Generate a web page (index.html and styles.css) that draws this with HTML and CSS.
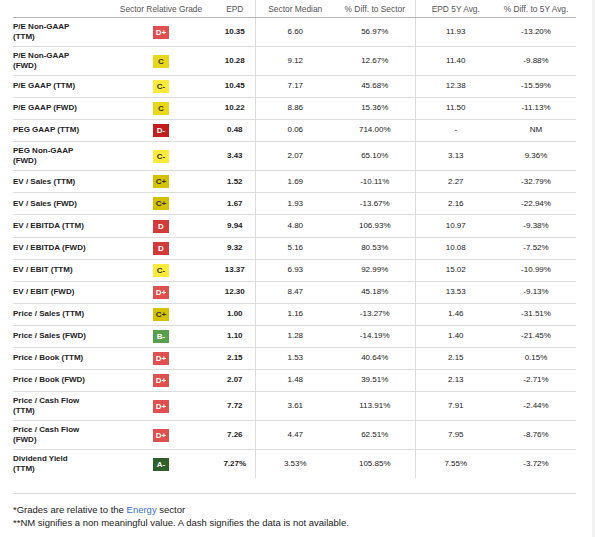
FILE: index.html
```html
<!DOCTYPE html>
<html lang="en">
<head>
    <meta charset="UTF-8">
    <meta name="viewport" content="width=device-width, initial-scale=1.0">
    <title>EPD Valuation Grades</title>
    <link rel="stylesheet" href="styles.css">
</head>
<body>
    <div class="page">
        <table class="grades">
            <colgroup>
                <col class="col-metric">
                <col class="col-grade">
                <col class="col-epd">
                <col class="col-num">
                <col class="col-num">
                <col class="col-avg">
                <col class="col-num">
            </colgroup>
            <thead>
                <tr>
                    <th></th>
                    <th>Sector Relative Grade</th>
                    <th class="sep">EPD</th>
                    <th>Sector Median</th>
                    <th class="sep">% Diff. to Sector</th>
                    <th>EPD 5Y Avg.</th>
                    <th>% Diff. to 5Y Avg.</th>
                </tr>
            </thead>
            <tbody>
                <tr class="tall">
                    <td class="metric">P/E Non-GAAP<br>(TTM)</td>
                    <td><span class="grade d-plus">D+</span></td>
                    <td class="epd sep">10.35</td>
                    <td>6.60</td>
                    <td class="sep">56.97%</td>
                    <td>11.93</td>
                    <td>-13.20%</td>
                </tr>
                <tr class="tall">
                    <td class="metric">P/E Non-GAAP<br>(FWD)</td>
                    <td><span class="grade c">C</span></td>
                    <td class="epd sep">10.28</td>
                    <td>9.12</td>
                    <td class="sep">12.67%</td>
                    <td>11.40</td>
                    <td>-9.88%</td>
                </tr>
                <tr>
                    <td class="metric">P/E GAAP (TTM)</td>
                    <td><span class="grade c-minus">C-</span></td>
                    <td class="epd sep">10.45</td>
                    <td>7.17</td>
                    <td class="sep">45.68%</td>
                    <td>12.38</td>
                    <td>-15.59%</td>
                </tr>
                <tr>
                    <td class="metric">P/E GAAP (FWD)</td>
                    <td><span class="grade c">C</span></td>
                    <td class="epd sep">10.22</td>
                    <td>8.86</td>
                    <td class="sep">15.36%</td>
                    <td>11.50</td>
                    <td>-11.13%</td>
                </tr>
                <tr>
                    <td class="metric">PEG GAAP (TTM)</td>
                    <td><span class="grade d-minus">D-</span></td>
                    <td class="epd sep">0.48</td>
                    <td>0.06</td>
                    <td class="sep">714.00%</td>
                    <td>-</td>
                    <td>NM</td>
                </tr>
                <tr class="tall">
                    <td class="metric">PEG Non-GAAP<br>(FWD)</td>
                    <td><span class="grade c-minus">C-</span></td>
                    <td class="epd sep">3.43</td>
                    <td>2.07</td>
                    <td class="sep">65.10%</td>
                    <td>3.13</td>
                    <td>9.36%</td>
                </tr>
                <tr>
                    <td class="metric">EV / Sales (TTM)</td>
                    <td><span class="grade c-plus">C+</span></td>
                    <td class="epd sep">1.52</td>
                    <td>1.69</td>
                    <td class="sep">-10.11%</td>
                    <td>2.27</td>
                    <td>-32.79%</td>
                </tr>
                <tr>
                    <td class="metric">EV / Sales (FWD)</td>
                    <td><span class="grade c-plus">C+</span></td>
                    <td class="epd sep">1.67</td>
                    <td>1.93</td>
                    <td class="sep">-13.67%</td>
                    <td>2.16</td>
                    <td>-22.94%</td>
                </tr>
                <tr>
                    <td class="metric">EV / EBITDA (TTM)</td>
                    <td><span class="grade d">D</span></td>
                    <td class="epd sep">9.94</td>
                    <td>4.80</td>
                    <td class="sep">106.93%</td>
                    <td>10.97</td>
                    <td>-9.38%</td>
                </tr>
                <tr>
                    <td class="metric">EV / EBITDA (FWD)</td>
                    <td><span class="grade d">D</span></td>
                    <td class="epd sep">9.32</td>
                    <td>5.16</td>
                    <td class="sep">80.53%</td>
                    <td>10.08</td>
                    <td>-7.52%</td>
                </tr>
                <tr>
                    <td class="metric">EV / EBIT (TTM)</td>
                    <td><span class="grade c-minus">C-</span></td>
                    <td class="epd sep">13.37</td>
                    <td>6.93</td>
                    <td class="sep">92.99%</td>
                    <td>15.02</td>
                    <td>-10.99%</td>
                </tr>
                <tr>
                    <td class="metric">EV / EBIT (FWD)</td>
                    <td><span class="grade d-plus">D+</span></td>
                    <td class="epd sep">12.30</td>
                    <td>8.47</td>
                    <td class="sep">45.18%</td>
                    <td>13.53</td>
                    <td>-9.13%</td>
                </tr>
                <tr>
                    <td class="metric">Price / Sales (TTM)</td>
                    <td><span class="grade c-plus">C+</span></td>
                    <td class="epd sep">1.00</td>
                    <td>1.16</td>
                    <td class="sep">-13.27%</td>
                    <td>1.46</td>
                    <td>-31.51%</td>
                </tr>
                <tr>
                    <td class="metric">Price / Sales (FWD)</td>
                    <td><span class="grade b-minus">B-</span></td>
                    <td class="epd sep">1.10</td>
                    <td>1.28</td>
                    <td class="sep">-14.19%</td>
                    <td>1.40</td>
                    <td>-21.45%</td>
                </tr>
                <tr>
                    <td class="metric">Price / Book (TTM)</td>
                    <td><span class="grade d-plus">D+</span></td>
                    <td class="epd sep">2.15</td>
                    <td>1.53</td>
                    <td class="sep">40.64%</td>
                    <td>2.15</td>
                    <td>0.15%</td>
                </tr>
                <tr>
                    <td class="metric">Price / Book (FWD)</td>
                    <td><span class="grade d-plus">D+</span></td>
                    <td class="epd sep">2.07</td>
                    <td>1.48</td>
                    <td class="sep">39.51%</td>
                    <td>2.13</td>
                    <td>-2.71%</td>
                </tr>
                <tr class="tall">
                    <td class="metric">Price / Cash Flow<br>(TTM)</td>
                    <td><span class="grade d-plus">D+</span></td>
                    <td class="epd sep">7.72</td>
                    <td>3.61</td>
                    <td class="sep">113.91%</td>
                    <td>7.91</td>
                    <td>-2.44%</td>
                </tr>
                <tr class="tall">
                    <td class="metric">Price / Cash Flow<br>(FWD)</td>
                    <td><span class="grade d-plus">D+</span></td>
                    <td class="epd sep">7.26</td>
                    <td>4.47</td>
                    <td class="sep">62.51%</td>
                    <td>7.95</td>
                    <td>-8.76%</td>
                </tr>
                <tr class="tall last">
                    <td class="metric">Dividend Yield<br>(TTM)</td>
                    <td><span class="grade a-minus">A-</span></td>
                    <td class="epd sep">7.27%</td>
                    <td>3.53%</td>
                    <td class="sep">105.85%</td>
                    <td>7.55%</td>
                    <td>-3.72%</td>
                </tr>
            </tbody>
        </table>

        <div class="notes">
            <p>*Grades are relative to the <a href="#">Energy</a> sector</p>
            <p>**NM signifies a non meaningful value. A dash signifies the data is not available.</p>
        </div>
    </div>
</body>
</html>
```

FILE: styles.css
```css
/* Page */
html {
    background-color: #f2f2f2;
}

body {
    margin: 0;
    padding: 0;
    font-family: "Liberation Sans", Arial, sans-serif;
    color: #222;
}

.page {
    width: 592px;
    min-height: 537px;
    background-color: #ffffff;
    padding: 0 0 0 13px;
    box-sizing: border-box;
}

/* Grades table */
.grades {
    width: 563px;
    border-collapse: collapse;
    table-layout: fixed;
    font-size: 8px;
}

.col-metric { width: 94px; }
.col-grade { width: 108px; }
.col-epd { width: 40px; }
.col-num { width: 80px; }
.col-avg { width: 81px; }

.grades th {
    height: 17px;
    padding: 0;
    font-size: 8.4px;
    line-height: 10px;
    font-weight: normal;
    color: #555;
    text-align: center;
    border-bottom: 1px solid #b5b5b5;
}

.grades td {
    height: 21.1px;
    padding: 0;
    text-align: center;
    vertical-align: middle;
    line-height: 10.5px;
    border-bottom: 1px solid #dcdcdc;
}

.grades tr.tall td {
    height: 28px;
}

.grades tr.last td {
    border-bottom: none;
}

.grades .sep {
    border-right: 1px solid #dcdcdc;
}

.grades td.metric {
    text-align: left;
    font-weight: bold;
    color: #222;
}

.grades td.epd {
    font-weight: bold;
}

/* Grade badges */
.grade {
    display: inline-block;
    width: 16px;
    height: 13px;
    line-height: 13px;
    font-weight: bold;
    font-size: 8px;
    color: #fff;
    vertical-align: middle;
}

.grade.a-minus { background-color: #2f5f2b; }
.grade.b-minus { background-color: #58a04e; }
.grade.c-plus { background-color: #d4c100; color: #333; }
.grade.c { background-color: #e9d71c; color: #333; }
.grade.c-minus { background-color: #fcea3c; color: #333; }
.grade.d-plus { background-color: #e05050; }
.grade.d { background-color: #d33a3a; }
.grade.d-minus { background-color: #c41f1f; }

/* Footnotes */
.notes {
    width: 563px;
    margin-top: 15px;
    padding-top: 10px;
    border-top: 1px solid #dcdcdc;
    font-size: 9.5px;
    line-height: 12.5px;
    color: #222;
}

.notes p {
    margin: 0;
}

.notes a {
    color: #3d6fd4;
    text-decoration: none;
}
```
